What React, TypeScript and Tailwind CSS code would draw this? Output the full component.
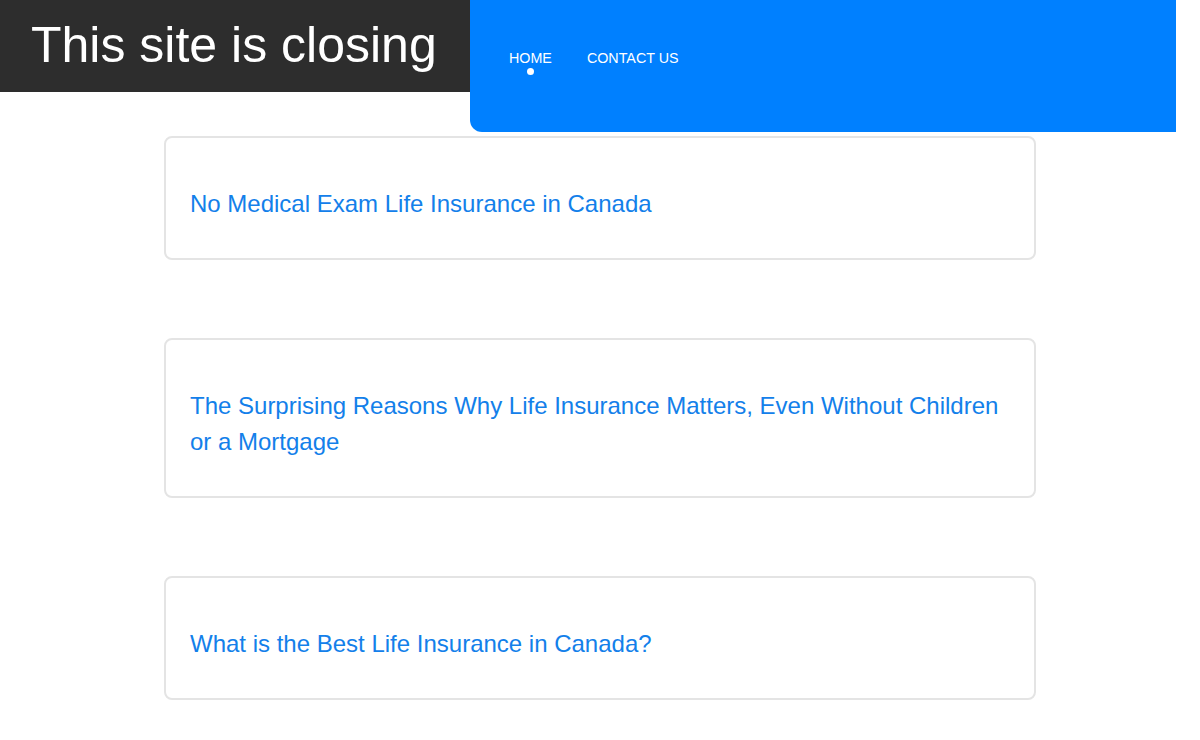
import React from "react";

const posts = [
  "No Medical Exam Life Insurance in Canada",
  "The Surprising Reasons Why Life Insurance Matters, Even Without Children or a Mortgage",
  "What is the Best Life Insurance in Canada?",
];

export default function App() {
  return (
    <div
      className="min-h-[740px] w-full bg-white"
      style={{ fontFamily: '"Liberation Sans", Arial, sans-serif' }}
    >
      <header className="flex items-start">
        <div className="h-[92px] w-[470px] shrink-0 bg-[#2d2d2d] pl-[31px] pt-[20px]">
          <h1 className="text-[50px] leading-none font-normal text-white whitespace-nowrap">
            This site is closing
          </h1>
        </div>
        <nav className="h-[132px] w-[706px] shrink-0 rounded-bl-[12px] bg-[#0080ff] pl-[39px] pt-[50px]">
          <ul className="flex items-start gap-[35px] text-[14.3px] leading-[16px] text-white">
            <li className="flex flex-col items-center">
              <span>HOME</span>
              <span className="mt-[2px] h-[7px] w-[7px] rounded-full bg-white" />
            </li>
            <li>CONTACT US</li>
          </ul>
        </nav>
      </header>
      <main className="mx-auto mt-[4px] flex w-[872px] flex-col gap-[78px]">
        {posts.map((p) => (
          <article
            key={p}
            className="rounded-[8px] border-2 border-[#e4e4e4] bg-white pl-[24px] pr-[24px] pt-[48px] pb-[36px]"
          >
            <h2 className="text-[24px] leading-[36px] font-normal text-[#1380ea]">{p}</h2>
          </article>
        ))}
      </main>
    </div>
  );
}
